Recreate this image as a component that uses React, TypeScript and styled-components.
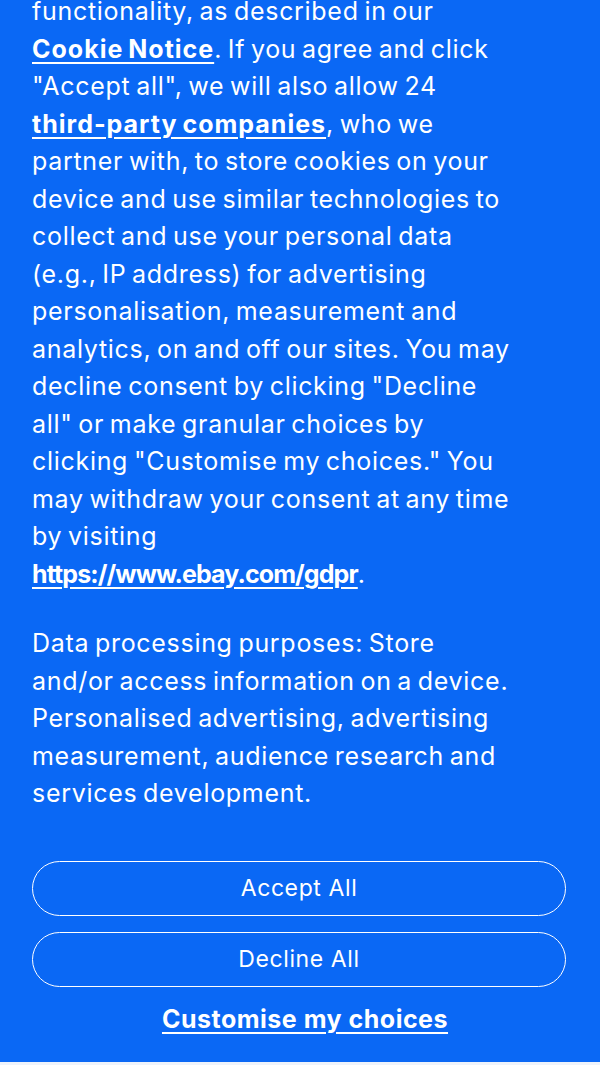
import styled, { createGlobalStyle } from "styled-components";

const GlobalStyle = createGlobalStyle`
  html, body {
    margin: 0;
    padding: 0;
    background: #eef3fb;
  }
  body {
    font-family: "Inter", "Noto Sans", sans-serif;
  }
`;

const Banner = styled.section`
  width: 600px;
  height: 1062px;
  background: #0a68f5;
  color: #ffffff;
  overflow: hidden;
  box-sizing: border-box;
  padding: 0 34px 0 32px;
  display: flex;
  flex-direction: column;
`;

const Copy = styled.p<{ $shift?: number }>`
  max-width: 486px;
  margin: ${(p) => (p.$shift ? `${p.$shift}px` : "0")} 0 32px;
  font-size: 25px;
  line-height: 37.5px;
  letter-spacing: 0.7px;
  word-spacing: -2px;
`;

const Link = styled.a<{ $spacing?: number }>`
  color: #ffffff;
  font-weight: 700;
  white-space: nowrap;
  text-decoration: underline;
  text-underline-offset: 4px;
  text-decoration-thickness: 2px;
  letter-spacing: ${(p) => p.$spacing ?? 1}px;
`;

const Actions = styled.div`
  display: flex;
  flex-direction: column;
  gap: 16px;
  margin-top: 16px;
`;

const PillButton = styled.button`
  height: 55px;
  width: 100%;
  border: 1.5px solid #ffffff;
  border-radius: 28px;
  background: transparent;
  color: #ffffff;
  font-family: "Inter", "Noto Sans", sans-serif;
  font-size: 23px;
  letter-spacing: 0.6px;
  cursor: pointer;
`;

const TextButton = styled.button`
  align-self: center;
  margin: 0 0 0 12px;
  border: none;
  background: none;
  color: #ffffff;
  font-family: "Inter", "Noto Sans", sans-serif;
  font-size: 25px;
  font-weight: 700;
  letter-spacing: 0.5px;
  text-decoration: underline;
  text-underline-offset: 4px;
  text-decoration-thickness: 2px;
  cursor: pointer;
`;

export default function App() {
  return (
    <>
      <GlobalStyle />
      <Banner>
        <Copy $shift={-7}>
          functionality, as described in our <Link>Cookie Notice</Link>. If you
          agree and click "Accept all", we will also allow 24{" "}
          <Link>third-party companies</Link>, who we partner with, to store
          cookies on your device and use similar technologies to collect and
          use your personal data (e.g., IP address) for advertising
          personalisation, measurement and analytics, on and off our sites. You
          may decline consent by clicking "Decline all" or make granular
          choices by clicking "Customise my choices." You may withdraw your
          consent at any time by visiting
          <br />
          <Link $spacing={-0.9}>https://www.ebay.com/gdpr</Link>.
        </Copy>
        <Copy>
          Data processing purposes: Store and/or access information on a
          device. Personalised advertising, advertising measurement, audience
          research and services development.
        </Copy>
        <Actions>
          <PillButton>Accept All</PillButton>
          <PillButton>Decline All</PillButton>
          <TextButton>Customise my choices</TextButton>
        </Actions>
      </Banner>
    </>
  );
}
